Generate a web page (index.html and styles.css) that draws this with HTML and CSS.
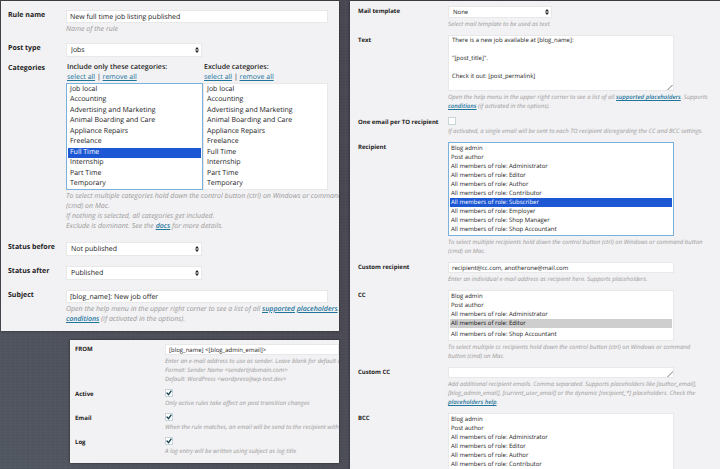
FILE: index.html
```html
<!DOCTYPE html>
<html lang="en">
<head>
    <meta charset="UTF-8">
    <meta name="viewport" content="width=device-width, initial-scale=1.0">
    <title>Post Status Notifications</title>
    <link rel="stylesheet" href="styles.css">
</head>
<body>
    <div class="left">
        <form class="panel rule">
            <div class="row">
                <label for="rule-name">Rule name</label>
                <div class="field">
                    <input type="text" id="rule-name" value="New full time job listing published">
                    <p class="hint">Name of the rule</p>
                </div>
            </div>
            <div class="row">
                <label for="post-type">Post type</label>
                <div class="field">
                    <div class="dropdown">
                        <select id="post-type"><option>Jobs</option></select>
                        <svg viewBox="0 0 4 6"><path d="M2 0L4 2.4H0zM2 6L0 3.6h4z"/></svg>
                    </div>
                </div>
            </div>
            <div class="row categories">
                <span class="label">Categories</span>
                <div class="field">
                    <div class="lists">
                        <div class="include">
                            <label for="include">Include only these categories:</label>
                            <div class="links"><a href="#">select all</a> | <a href="#">remove all</a></div>
                            <select id="include" class="active" multiple size="10">
                                <option>Job local</option>
                                <option>Accounting</option>
                                <option>Advertising and Marketing</option>
                                <option>Animal Boarding and Care</option>
                                <option>Appliance Repairs</option>
                                <option>Freelance</option>
                                <option selected>Full Time</option>
                                <option>Internship</option>
                                <option>Part Time</option>
                                <option>Temporary</option>
                            </select>
                        </div>
                        <div class="exclude">
                            <label for="exclude">Exclude categories:</label>
                            <div class="links"><a href="#">select all</a> | <a href="#">remove all</a></div>
                            <select id="exclude" multiple size="10">
                                <option>Job local</option>
                                <option>Accounting</option>
                                <option>Advertising and Marketing</option>
                                <option>Animal Boarding and Care</option>
                                <option>Appliance Repairs</option>
                                <option>Freelance</option>
                                <option>Full Time</option>
                                <option>Internship</option>
                                <option>Part Time</option>
                                <option>Temporary</option>
                            </select>
                        </div>
                    </div>
                    <p class="hint">To select multiple categories hold down the control button (ctrl) on Windows or command button<br>(cmd) on Mac.<br>If nothing is selected, all categories get included.<br>Exclude is dominant. See the <a href="#">docs</a> for more details.</p>
                </div>
            </div>
            <div class="row status">
                <label for="status-before">Status before</label>
                <div class="field">
                    <div class="dropdown">
                        <select id="status-before"><option>Not published</option></select>
                        <svg viewBox="0 0 4 6"><path d="M2 0L4 2.4H0zM2 6L0 3.6h4z"/></svg>
                    </div>
                </div>
            </div>
            <div class="row status">
                <label for="status-after">Status after</label>
                <div class="field">
                    <div class="dropdown">
                        <select id="status-after"><option>Published</option></select>
                        <svg viewBox="0 0 4 6"><path d="M2 0L4 2.4H0zM2 6L0 3.6h4z"/></svg>
                    </div>
                </div>
            </div>
            <div class="row status">
                <label for="subject">Subject</label>
                <div class="field">
                    <input type="text" id="subject" value="[blog_name]: New job offer">
                    <p class="hint">Open the help menu in the upper right corner to see a list of all <a href="#">supported placeholders</a>. Supports<br><a href="#">conditions</a> (if activated in the options).</p>
                </div>
            </div>
        </form>

        <form class="panel small sender">
            <div class="row">
                <label for="from">FROM</label>
                <div class="field">
                    <input type="text" id="from" value="[blog_name] &lt;[blog_admin_email]&gt;">
                    <p class="hint">Enter an e-mail address to use as sender. Leave blank for default value.<br>Format: Sender Name &lt;sender@domain.com&gt;<br>Default: WordPress &lt;wordpress@wp-test.dev&gt;</p>
                </div>
            </div>
            <div class="row">
                <label for="active">Active</label>
                <div class="field">
                    <input type="checkbox" id="active" checked>
                    <p class="hint">Only active rules take affect on post transition changes</p>
                </div>
            </div>
            <div class="row">
                <label for="email">Email</label>
                <div class="field">
                    <input type="checkbox" id="email" checked>
                    <p class="hint">When the rule matches, an email will be send to the recipient with</p>
                </div>
            </div>
            <div class="row">
                <label for="log">Log</label>
                <div class="field">
                    <input type="checkbox" id="log" checked>
                    <p class="hint">A log entry will be written using subject as log title</p>
                </div>
            </div>
        </form>
    </div>

    <form class="panel small mail">
        <div class="row">
            <label for="template">Mail template</label>
            <div class="field">
                <div class="dropdown">
                    <select id="template"><option>None</option></select>
                    <svg viewBox="0 0 4 6"><path d="M2 0L4 2.4H0zM2 6L0 3.6h4z"/></svg>
                </div>
                <p class="hint">Select mail template to be used as text.</p>
            </div>
        </div>
        <div class="row">
            <label for="text">Text</label>
            <div class="field">
                <textarea id="text">There is a new job available at [blog_name]:

"[post_title]".

Check it out: [post_permalink]</textarea>
                <p class="hint">Open the help menu in the upper right corner to see a list of all <a href="#">supported placeholders</a>. Supports<br><a href="#">conditions</a> (if activated in the options).</p>
            </div>
        </div>
        <div class="row">
            <label for="single">One email per TO recipient</label>
            <div class="field">
                <input type="checkbox" id="single">
                <p class="hint">If activated, a single email will be sent to each TO recipient disregarding the CC and BCC settings.</p>
            </div>
        </div>
        <div class="row">
            <label for="recipient">Recipient</label>
            <div class="field">
                <select id="recipient" class="active" multiple size="10">
                    <option>Blog admin</option>
                    <option>Post author</option>
                    <option>All members of role: Administrator</option>
                    <option>All members of role: Editor</option>
                    <option>All members of role: Author</option>
                    <option>All members of role: Contributor</option>
                    <option selected>All members of role: Subscriber</option>
                    <option>All members of role: Employer</option>
                    <option>All members of role: Shop Manager</option>
                    <option>All members of role: Shop Accountant</option>
                </select>
                <p class="hint">To select multiple recipients hold down the control button (ctrl) on Windows or command button<br>(cmd) on Mac.</p>
            </div>
        </div>
        <div class="row">
            <label for="custom-recipient">Custom recipient</label>
            <div class="field">
                <input type="text" id="custom-recipient" value="recipient@cc.com, anotherone@mail.com">
                <p class="hint">Enter an individual e-mail address as recipient here. Supports placeholders.</p>
            </div>
        </div>
        <div class="row">
            <label for="cc">CC</label>
            <div class="field">
                <select id="cc" multiple size="5">
                    <option>Blog admin</option>
                    <option>Post author</option>
                    <option>All members of role: Administrator</option>
                    <option selected>All members of role: Editor</option>
                    <option class="last">All members of role: Shop Accountant</option>
                </select>
                <p class="hint">To select multiple cc recipients hold down the control button (ctrl) on Windows or command<br>button (cmd) on Mac.</p>
            </div>
        </div>
        <div class="row">
            <label for="custom-cc">Custom CC</label>
            <div class="field">
                <textarea id="custom-cc" class="short"></textarea>
                <p class="hint">Add additional recipient emails. Comma separated. Supports placeholders like [author_email],<br>[blog_admin_email], [current_user_email] or the dynamic [recipient_*] placeholders. Check the<br><a href="#">placeholders help</a>.</p>
            </div>
        </div>
        <div class="row">
            <label for="bcc">BCC</label>
            <div class="field">
                <select id="bcc" multiple size="10">
                    <option>Blog admin</option>
                    <option>Post author</option>
                    <option>All members of role: Administrator</option>
                    <option>All members of role: Editor</option>
                    <option>All members of role: Author</option>
                    <option>All members of role: Contributor</option>
                </select>
            </div>
        </div>
    </form>
</body>
</html>
```
FILE: styles.css
```css
* {
    box-sizing: border-box;
}

body {
    margin: 0;
    padding: 1px 0 0 1px;
    height: 100vh;
    overflow: hidden;
    display: grid;
    grid-template-columns: 338fr 370fr;
    column-gap: 11px;
    font-family: "Open Sans", sans-serif;
    font-size: 7px;
    line-height: 10px;
    text-rendering: geometricPrecision;
    color: #222;
    background-color: #4c4b55;
    background-image:
        repeating-linear-gradient(90deg, rgba(255, 255, 255, 0.02) 0 1px, transparent 1px 5px),
        repeating-linear-gradient(0deg, rgba(0, 0, 0, 0.04) 0 1px, transparent 1px 3px),
        linear-gradient(45deg, #525862, #4a4852 50%);
}

.left {
    display: flex;
    flex-direction: column;
    gap: 9px;
    min-width: 0;
}

.panel {
    background-color: #f2f1f3;
    box-shadow: 0 0 2px #222;
    overflow: hidden;
    min-width: 0;
}

.rule {
    padding: 9px 11px 6px 6px;
}

.sender {
    margin-left: 69px;
    padding: 4px 0 7px 4px;
}

.mail {
    height: calc(100vh - 1px);
    padding: 5px 46px 0 7px;
}

.row {
    display: grid;
    grid-template-columns: 59px minmax(0, 1fr);
    margin-top: 8px;
}

.row:first-child {
    margin-top: 0;
}

.row.categories {
    margin-top: 6px;
}

.row.status {
    margin-top: 10px;
}

.row label,
.row .label {
    font-weight: 700;
    color: #222;
    padding: 1px 0 0 1px;
    white-space: nowrap;
}

input,
select,
textarea {
    display: block;
    width: 100%;
    height: 13px;
    margin: 0;
    padding: 1px 3px 0;
    border: 1px solid #e8e8e8;
    border-radius: 0;
    background-color: #fff;
    color: #222;
    font: inherit;
    text-rendering: inherit;
    outline: none;
    appearance: none;
}

.dropdown {
    position: relative;
    width: 52%;
}

.dropdown select {
    height: 14px;
    padding: 2px 4px 0;
}

.dropdown svg {
    position: absolute;
    right: 3px;
    top: 4px;
    width: 4px;
    height: 6px;
    fill: #222;
}

select[multiple] {
    height: 107px;
    padding: 1px 1px 0;
    overflow: hidden;
}

option {
    padding: 0 2px;
    min-height: 0;
    height: 10px;
    line-height: 10px;
}

.lists option:nth-child(even) {
    height: 11px;
}

select.active {
    border-color: #7ab0dc;
}

select.active option:checked {
    background-image: linear-gradient(#1d57d4, #1d57d4);
    -webkit-text-fill-color: #fff;
}

.lists {
    display: grid;
    grid-template-columns: 137fr 125fr;
}

.lists label {
    display: block;
    font-weight: 600;
    padding: 0 0 0 1px;
}

.links {
    padding-left: 1px;
}

.hint {
    margin: 2px 0 0;
    font-size: 7px;
    font-style: italic;
    color: #999;
    white-space: nowrap;
}

a {
    color: #21759b;
}

.hint a {
    font-weight: 600;
}

/* denser forms */
.small {
    font-size: 6px;
    line-height: 9px;
}

.small .row {
    grid-template-columns: 91px minmax(0, 1fr);
    margin-top: 6px;
}

.small .row:first-child {
    margin-top: 0;
}

.small.sender .row + .row {
    margin-top: 5px;
}

.small .hint {
    font-size: 6px;
}

.small input {
    height: 11px;
    padding-top: 0;
}

.small .dropdown {
    width: 46%;
}

.small .dropdown select {
    height: 12px;
    padding-top: 0;
}

.small .dropdown svg {
    top: 3px;
}

.small select[multiple] {
    height: 94px;
}

.small option {
    height: 9px;
    line-height: 9px;
    padding: 0 1px;
}

.small #cc {
    height: 51px;
}

.small option.last {
    margin-top: 2px;
}

textarea {
    height: 56px;
    padding: 0 3px;
    resize: vertical;
}

textarea.short {
    height: 11px;
    min-height: 0;
    overflow: hidden;
}

textarea::-webkit-resizer {
    background: linear-gradient(135deg, transparent 80%, #bbb 80% 85%, transparent 85%);
}

.small input[type="checkbox"] {
    display: grid;
    place-items: center;
    width: 8px;
    height: 8px;
    padding: 0;
    border-color: #c8d4d8;
}

input[type="checkbox"]:checked::before {
    content: "";
    width: 6px;
    height: 6px;
    background-color: #1e4a5a;
    clip-path: polygon(0 50%, 20% 38%, 40% 60%, 82% 4%, 100% 16%, 44% 96%);
}
```
